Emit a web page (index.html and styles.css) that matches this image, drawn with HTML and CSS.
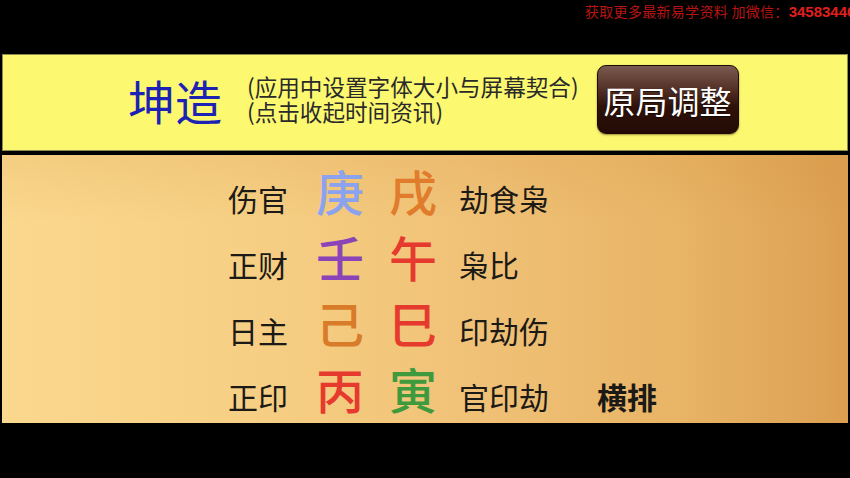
FILE: index.html
```html
<!DOCTYPE html>
<html lang="zh">
<head>
<meta charset="utf-8">
<title>坤造</title>
<link rel="stylesheet" href="styles.css">
</head>
<body>
<div class="screen">
  <div class="watermark"><span class="wm-cn">获取更多最新易学资料 加微信：</span><span class="wm-num">34583440</span></div>
  <div class="header">
    <div class="title">坤造</div>
    <div class="subtitle">
      <div>(应用中设置字体大小与屏幕契合)</div>
      <div>(点击收起时间资讯)</div>
    </div>
    <div class="btn">原局调整</div>
  </div>
  <div class="board">
    <div class="chart">
      <span class="lbl">伤官</span><span class="gz c-blue">庚</span><span class="gz c-orange">戌</span><span class="lbl">劫食枭</span><span></span>
      <span class="lbl">正财</span><span class="gz c-purple">壬</span><span class="gz c-red">午</span><span class="lbl">枭比</span><span></span>
      <span class="lbl">日主</span><span class="gz c-orange2">己</span><span class="gz c-red">巳</span><span class="lbl">印劫伤</span><span></span>
      <span class="lbl">正印</span><span class="gz c-red">丙</span><span class="gz c-green">寅</span><span class="lbl">官印劫</span><span class="lbl bold">横排</span>
    </div>
  </div>
</div>
</body>
</html>
```

FILE: styles.css
```css
html, body {
  margin: 0;
  padding: 0;
  background: #000;
}
body {
  width: 850px;
  height: 478px;
  overflow: hidden;
  font-family: "Noto Sans CJK SC", "Noto Sans", sans-serif;
}
.screen {
  position: relative;
  width: 850px;
  height: 478px;
  padding: 54px 2px 0 2px;
  box-sizing: border-box;
  overflow: hidden;
}
.watermark {
  position: absolute;
  top: 0;
  left: 585px;
  white-space: nowrap;
  color: #b81414;
  line-height: 20px;
}
.wm-cn {
  font-size: 14px;
  letter-spacing: 0.3px;
}
.wm-num {
  font-family: "Liberation Sans", Arial, sans-serif;
  font-weight: bold;
  font-size: 15px;
  color: #e01f1f;
}
.header {
  height: 97px;
  box-sizing: border-box;
  background: #fcf870;
  border: 1px solid #8f8c52;
  display: flex;
  align-items: center;
  padding: 0 0 6px 125px;
}
.title {
  font-size: 47px;
  line-height: 50px;
  color: #1b22b4;
}
.subtitle {
  margin-left: 25px;
  font-size: 22.6px;
  line-height: 24.5px;
  color: #2a2a2a;
}
.btn {
  margin-left: 18px;
  width: 142px;
  height: 69px;
  box-sizing: border-box;
  border-radius: 9px;
  border: 1px solid #1e0904;
  background: linear-gradient(#7a5a50 0%, #4d2a20 40%, #2f120a 60%, #230b05 100%);
  box-shadow: 0 1px 2px rgba(60, 40, 0, 0.5);
  color: #fff;
  font-size: 32px;
  display: flex;
  align-items: center;
  justify-content: center;
  text-shadow: 0 1px 1px rgba(0, 0, 0, 0.6);
}
.board {
  margin-top: 4px;
  height: 268px;
  box-sizing: border-box;
  background:
    linear-gradient(180deg, rgba(200, 130, 40, 0.12) 0%, rgba(200, 130, 40, 0) 25%),
    linear-gradient(90deg, #fad88e 0%, #f6cf84 30%, #f0c277 55%, #e8b466 80%, #dc9f52 100%);
  padding: 11px 0 0 226px;
}
.chart {
  display: grid;
  grid-template-columns: 88px 73px 70px 138px auto;
  grid-auto-rows: 48px;
  row-gap: 18px;
  align-items: baseline;
  width: max-content;
}
.lbl {
  font-size: 30px;
  line-height: 1;
  color: #1c1a16;
}
.bold {
  font-weight: bold;
}
.gz {
  font-size: 48px;
  line-height: 1;
  font-weight: 500;
}
.c-blue { color: #8ba2ee; }
.c-orange { color: #e07c2c; }
.c-orange2 { color: #d87c2a; }
.c-purple { color: #8a44b8; }
.c-red { color: #e63a2e; }
.c-green { color: #3f9a3d; }
```
